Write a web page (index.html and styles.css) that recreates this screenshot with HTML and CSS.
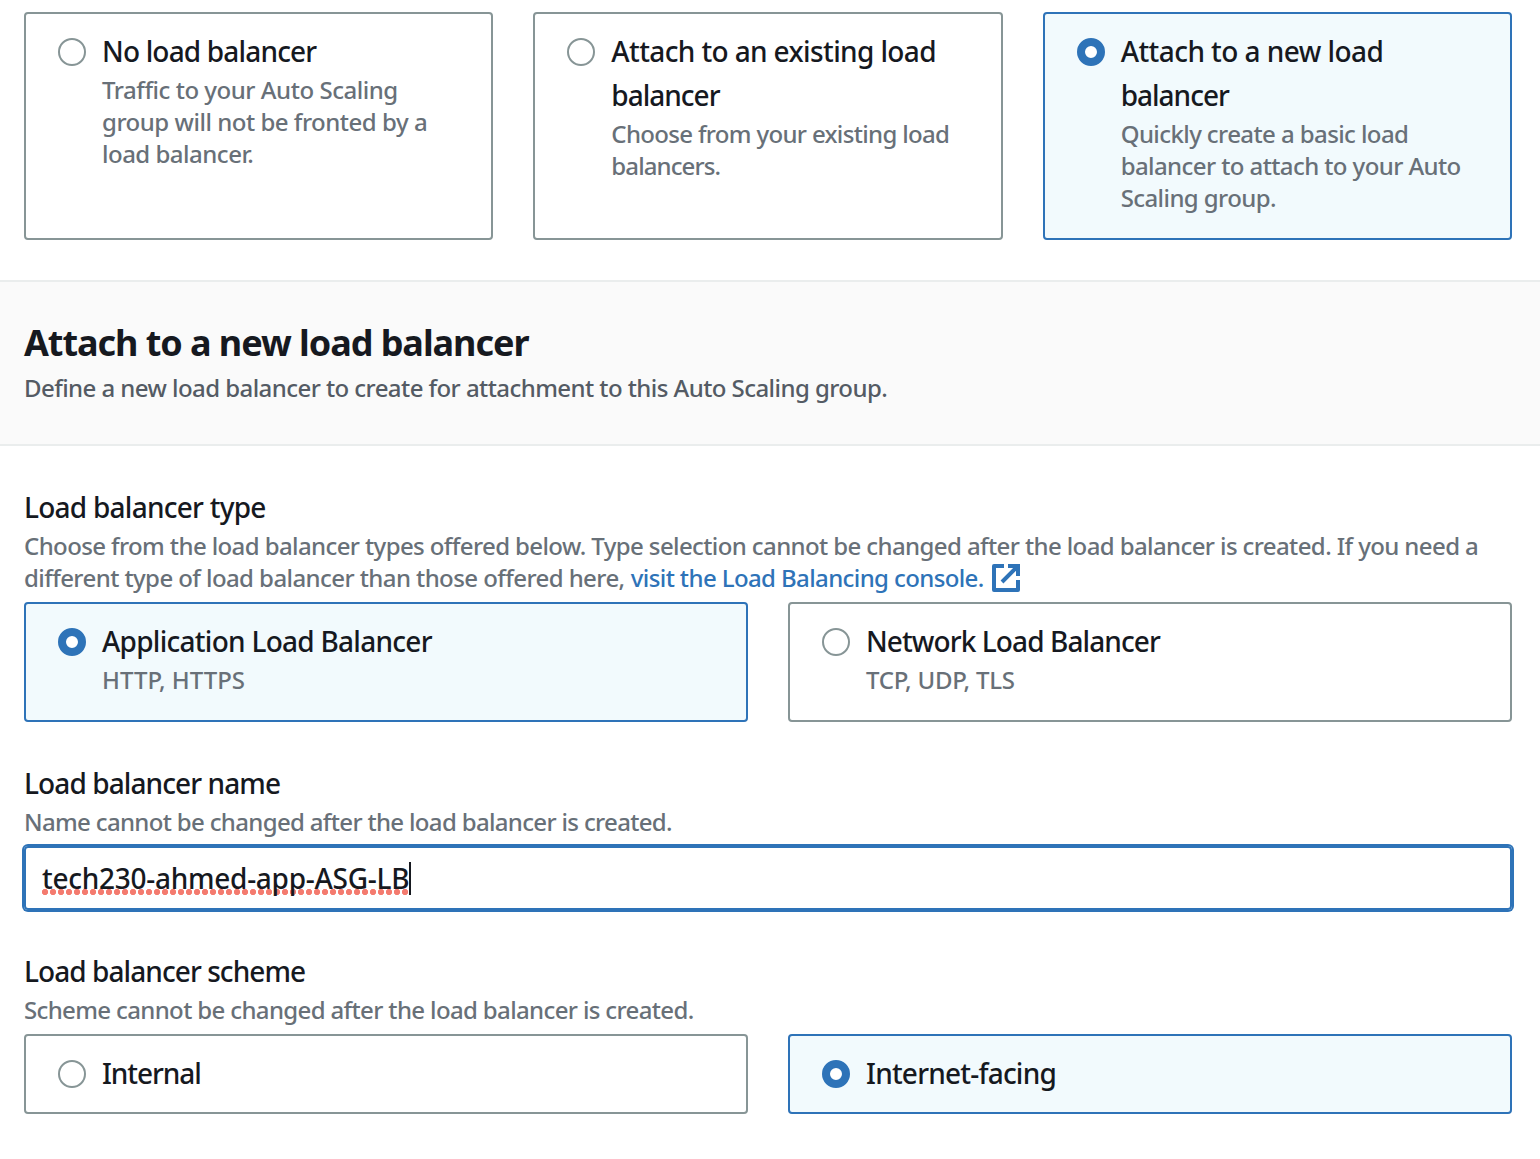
FILE: index.html
```html
<!DOCTYPE html>
<html lang="en">
<head>
<meta charset="utf-8">
<title>Load balancing</title>
<link rel="stylesheet" href="styles.css">
</head>
<body>
<main>
  <div class="tiles tiles-three">
    <div class="tile">
      <span class="radio"></span>
      <div class="tile-text">
        <div class="label t-none">No load balancer</div>
        <div class="hint"><span class="h-traffic">Traffic to your Auto Scaling</span><br><span class="h-group">group will not be fronted by a</span><br><span class="h-load">load balancer.</span></div>
      </div>
    </div>
    <div class="tile">
      <span class="radio"></span>
      <div class="tile-text">
        <div class="label"><span class="t-existing">Attach to an existing load</span><br><span class="t-balancer">balancer</span></div>
        <div class="hint"><span class="h-choose">Choose from your existing load</span><br><span class="h-balancers">balancers.</span></div>
      </div>
    </div>
    <div class="tile selected">
      <span class="radio"></span>
      <div class="tile-text">
        <div class="label"><span class="t-new">Attach to a new load</span><br><span class="t-balancer">balancer</span></div>
        <div class="hint h-quick">Quickly create a basic load<br>balancer to attach to your Auto<br>Scaling group.</div>
      </div>
    </div>
  </div>

  <header class="section-header">
    <h2>Attach to a new load balancer</h2>
    <p>Define a new load balancer to create for attachment to this Auto Scaling group.</p>
  </header>

  <div class="form">
    <section class="field">
      <div class="label t-type">Load balancer type</div>
      <div class="hint"><span class="h-types">Choose from the load balancer types offered below. Type selection cannot be changed after the load balancer is created. If you need a</span><br><span class="h-diff">different type of load balancer than those offered here,</span> <a class="link"><span class="h-visit">visit the Load Balancing console.</span><svg class="external" viewBox="0 0 28 28" width="28" height="28" fill="none" stroke="currentColor" stroke-width="4"><path d="M12 2H2v24h24V16" stroke-linejoin="round"/><path d="M16 2h10v10M26 2 10 18"/></svg></a></div>
      <div class="tiles tiles-two">
        <div class="tile selected">
          <span class="radio"></span>
          <div class="tile-text">
            <div class="label t-app">Application Load Balancer</div>
            <div class="hint h-http">HTTP, HTTPS</div>
          </div>
        </div>
        <div class="tile">
          <span class="radio"></span>
          <div class="tile-text">
            <div class="label t-network">Network Load Balancer</div>
            <div class="hint h-tcp">TCP, UDP, TLS</div>
          </div>
        </div>
      </div>
    </section>

    <section class="field">
      <div class="label t-name">Load balancer name</div>
      <div class="hint h-name">Name cannot be changed after the load balancer is created.</div>
      <div class="input"><span class="value">tech230-ahmed-app-ASG-LB</span><span class="caret"></span></div>
    </section>

    <section class="field">
      <div class="label t-scheme">Load balancer scheme</div>
      <div class="hint h-scheme">Scheme cannot be changed after the load balancer is created.</div>
      <div class="tiles tiles-two">
        <div class="tile compact">
          <span class="radio"></span>
          <div class="tile-text"><div class="label t-internal">Internal</div></div>
        </div>
        <div class="tile compact selected">
          <span class="radio"></span>
          <div class="tile-text"><div class="label t-facing">Internet-facing</div></div>
        </div>
      </div>
    </section>
  </div>
</main>
</body>
</html>
```

FILE: styles.css
```css
* { box-sizing: border-box; }

body {
  margin: 0;
  background: #fff;
  color: #16191f;
  font-family: "Noto Sans", "Open Sans", sans-serif;
  font-weight: 500;
  overflow: hidden;
}

.tiles { display: grid; gap: 40px; }
.tiles-three { grid-template-columns: repeat(3, 1fr); padding: 12px 28px 40px 24px; }
.tiles-two { grid-template-columns: repeat(2, 1fr); margin-top: 8px; }

.tile {
  display: flex;
  gap: 16px;
  padding: 16px 24px 24px 32px;
  border: 2px solid #879596;
  border-radius: 4px;
}
.tile.compact { padding-bottom: 16px; }
.tile.selected { border-color: #2e73b8; background: #f2fafd; }

.radio {
  flex: none;
  width: 28px;
  height: 28px;
  margin-top: 8px;
  border: 2px solid #879596;
  border-radius: 50%;
  background: #fff;
}
.selected .radio { border: 8px solid #2e73b8; }

.tile-text { white-space: nowrap; }

.label { margin-top: -1px; padding-bottom: 1px; font-size: 28px; line-height: 44px; white-space: nowrap; }
.hint { font-size: 24px; line-height: 32px; color: #687078; white-space: nowrap; }

.section-header {
  height: 166px;
  padding: 39px 24px 0;
  border-top: 2px solid #eaeded;
  border-bottom: 2px solid #eaeded;
  background: #fafafa;
}
.section-header h2 { margin: 0; font-size: 36px; line-height: 43px; font-weight: 700; letter-spacing: -1.05px; white-space: nowrap; }
.section-header p { margin: 8px 0 0; font-size: 24px; line-height: 32px; color: #545b64; letter-spacing: -0.565px; white-space: nowrap; }

.form { display: flex; flex-direction: column; gap: 40px; padding: 40px 28px 0 24px; }

.link { color: #2e73b8; }
.external { margin-left: 8px; vertical-align: -5px; }

.input {
  display: flex;
  align-items: center;
  height: 64px;
  margin-top: 8px;
  padding: 0 16px;
  border: 2px solid #2e73b8;
  border-radius: 4px;
  box-shadow: 0 0 0 2px #2e73b8;
  font-size: 28px;
}
.value {
  height: 34px;
  line-height: 34px;
  letter-spacing: -0.27px;
  background: radial-gradient(circle at 3px 3px, #f47b6f 2.8px, transparent 3.4px) 0 100% / 8px 6px repeat-x;
}
.caret { width: 2px; height: 33px; background: #16191f; }

/* Tracking for each label and hint */
.t-none { letter-spacing: -0.83px; }
.t-existing { letter-spacing: -0.62px; }
.t-balancer { letter-spacing: -1px; }
.t-new { letter-spacing: -0.56px; }
.t-type { letter-spacing: -0.75px; }
.t-app { letter-spacing: -0.73px; }
.t-network { letter-spacing: -0.9px; }
.t-name { letter-spacing: -0.9px; }
.t-scheme { letter-spacing: -0.93px; }
.t-internal { letter-spacing: -1.05px; }
.t-facing { letter-spacing: -0.78px; }
.h-traffic { letter-spacing: -0.46px; }
.h-group { letter-spacing: -0.48px; }
.h-load { letter-spacing: -0.5px; }
.h-choose { letter-spacing: -0.67px; }
.h-balancers { letter-spacing: -0.9px; }
.h-quick { letter-spacing: -0.59px; }
.h-types { letter-spacing: -0.608px; }
.h-diff { letter-spacing: -0.58px; }
.h-visit { letter-spacing: -0.61px; }
.h-http { letter-spacing: 0; }
.h-tcp { letter-spacing: -0.22px; }
.h-name { letter-spacing: -0.665px; }
.h-scheme { letter-spacing: -0.64px; }
```
